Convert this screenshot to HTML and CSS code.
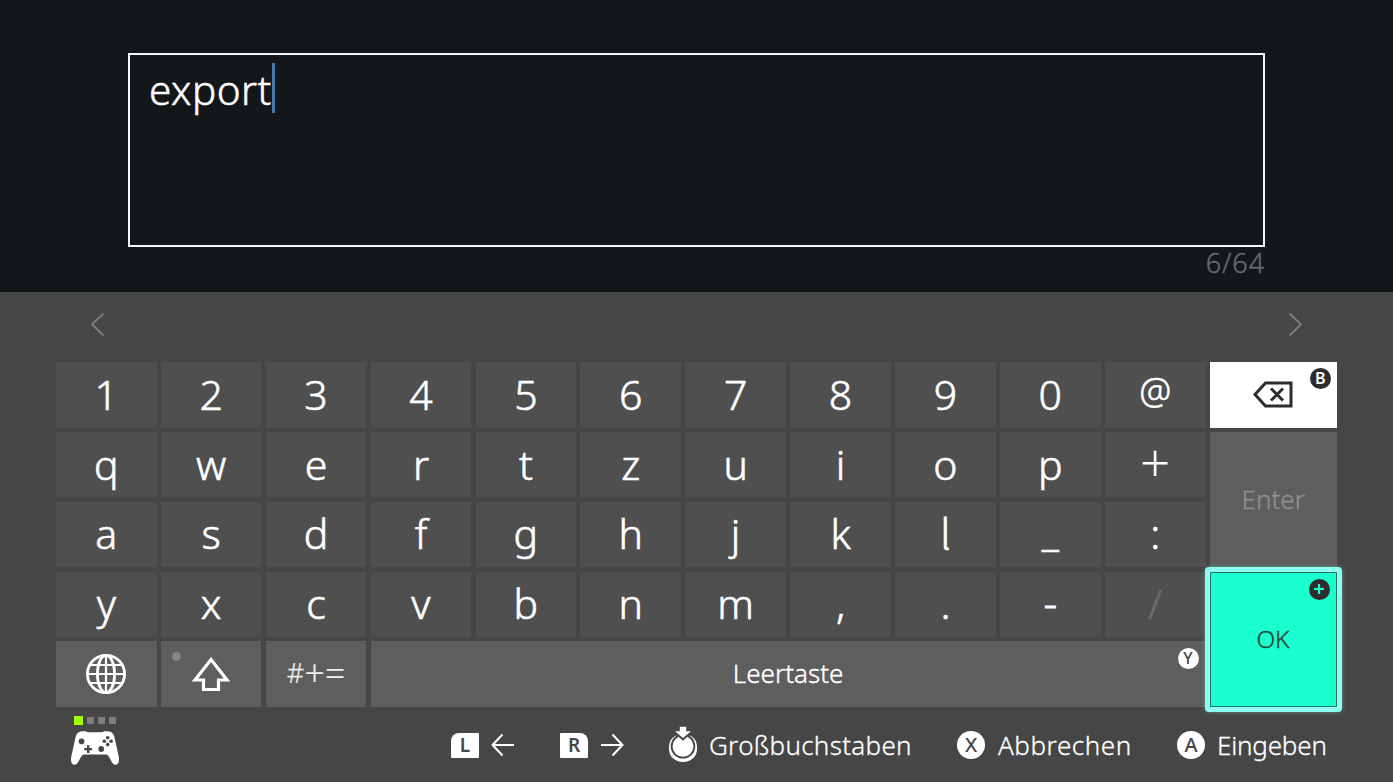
FILE: index.html
```html
<!DOCTYPE html>
<html lang="de">
<head>
<meta charset="utf-8">
<title>Tastatur</title>
<link rel="stylesheet" href="styles.css">
</head>
<body>
<main class="screen">
  <section class="entry">
    <div class="field"><span class="value">export</span><span class="caret"></span></div>
    <div class="counter">6/64</div>
  </section>
  <section class="panel">
    <div class="suggestions">
      <svg width="15" height="25" viewBox="0 0 15 25"><path d="M13.5 1.5 2 12.5 13.5 23.5"/></svg>
      <svg width="15" height="25" viewBox="0 0 15 25"><path d="M1.5 1.5 13 12.5 1.5 23.5"/></svg>
    </div>
    <div class="keys">
      <div class="key">1</div><div class="key">2</div><div class="key">3</div><div class="key">4</div><div class="key">5</div><div class="key">6</div><div class="key">7</div><div class="key">8</div><div class="key">9</div><div class="key">0</div><div class="key at">@</div>
      <div class="key backspace">
        <svg width="40" height="27" viewBox="0 0 40 27"><path d="M2 13.5 12.5 2H38V25H12.5Z"/><path d="M18 7.5 30 19.5M30 7.5 18 19.5"/></svg>
        <span class="badge dark">B</span>
      </div>
      <div class="key">q</div><div class="key">w</div><div class="key">e</div><div class="key">r</div><div class="key">t</div><div class="key">z</div><div class="key">u</div><div class="key">i</div><div class="key">o</div><div class="key">p</div><div class="key plus">+</div>
      <div class="key enter">Enter</div>
      <div class="key">a</div><div class="key">s</div><div class="key">d</div><div class="key">f</div><div class="key">g</div><div class="key">h</div><div class="key">j</div><div class="key">k</div><div class="key ell">l</div><div class="key underscore">_</div><div class="key">:</div>
      <div class="key">y</div><div class="key">x</div><div class="key">c</div><div class="key">v</div><div class="key">b</div><div class="key">n</div><div class="key">m</div><div class="key">,</div><div class="key">.</div><div class="key hyphen">-</div><div class="key off">/</div>
      <div class="key ok"><span>OK</span>
        <span class="badge dark"><svg width="12" height="12" viewBox="0 0 12 12"><path d="M6 1V11M1 6H11" stroke="#1affce" stroke-width="2.2"/></svg></span>
      </div>
      <div class="key tool">
        <svg class="globe" width="42" height="42" viewBox="0 0 42 42"><circle cx="21" cy="21" r="18.6"/><ellipse cx="21" cy="21" rx="8.6" ry="18.6"/><path d="M21 2V40M2 21H40M5 12H37M5 30H37" stroke-width="2.2"/></svg>
      </div>
      <div class="key tool">
        <svg width="40" height="36" viewBox="0 0 40 36"><path d="M20 3.5 36 24H27.5V33.5H12.5V24H4Z"/></svg>
        <span class="dot"></span>
      </div>
      <div class="key tool symbols"><span>#</span><span class="wide">+</span><span class="wide">=</span></div>
      <div class="key tool space"><span>Leertaste</span><span class="badge light">Y</span></div>
    </div>
    <footer class="bar">
      <div class="player">
        <div class="leds"><i class="led on"></i><i class="led"></i><i class="led"></i><i class="led"></i></div>
        <svg width="50" height="36" viewBox="0 0 50 36"><path fill="#fff" d="M14 1.3C15 .9 16.5 1.6 18 2.2H32C33.5 1.6 35 .9 36 1.3C40.5 1 43.3 2.8 44.3 6.5L48.8 27C49.5 31.5 48.3 34.5 45.7 34.8C43.2 35 42 32.5 40.8 30L38.6 26.3C37.7 25 36.7 24.6 35 24.6H15C13.3 24.6 12.3 25 11.4 26.3L9.2 30C8 32.5 6.8 35 4.3 34.8C1.7 34.5.5 31.5 1.2 27L5.7 6.5C6.7 2.8 9.5 1 14 1.3Z"/><g fill="#464646"><circle cx="11.5" cy="11.3" r="2.9"/><circle cx="31.2" cy="19" r="2.9"/><circle cx="37.7" cy="7.8" r="1.8"/><circle cx="37.7" cy="14.6" r="1.8"/><circle cx="34.3" cy="11.2" r="1.8"/><circle cx="41.1" cy="11.2" r="1.8"/><path d="M17 15.2H19.4V17.9H22V20.2H19.4V23H17V20.2H14.2V17.9H17Z"/></g></svg>
      </div>
      <div class="hints">
        <div class="hint"><span class="shoulder left">L</span><svg class="arrow" width="24" height="24" viewBox="0 0 24 24"><path d="M23 12H1.5M11.5 1.5 1.5 12 11.5 22.5"/></svg></div>
        <div class="hint"><span class="shoulder right">R</span><svg class="arrow" width="24" height="24" viewBox="0 0 24 24"><path d="M1 12H22.5M12.5 1.5 22.5 12 12.5 22.5"/></svg></div>
        <div class="hint"><svg class="stick" width="28" height="37" viewBox="0 0 28 37"><path d="M0 21C0 16 2.5 12 6.5 9.8H21.5C25.5 12 28 16 28 21V23C28 30.5 22 36 14 36S0 30.5 0 23Z" fill="#fff"/><circle cx="14" cy="20.3" r="11.4" fill="#fff" stroke="#464646" stroke-width="1.8"/><path d="M10.8 1H17.2V5.5H22.5L14 13 5.5 5.5H10.8Z" fill="#fff" stroke="#464646" stroke-width="2.8"/><path d="M10.8.8H17.2V5.3H22L14 12 6 5.3H10.8Z" fill="#fff"/></svg><span class="label caps">Großbuchstaben</span></div>
        <div class="hint"><span class="round">X</span><span class="label cancel">Abbrechen</span></div>
        <div class="hint"><span class="round">A</span><span class="label submit">Eingeben</span></div>
      </div>
    </footer>
  </section>
</main>
</body>
</html>
```
FILE: styles.css
```css
* { box-sizing: border-box; }
body { margin: 0; font-family: "Noto Sans", "Noto Sans CJK JP", sans-serif; font-weight: 300; color: #fff; }
svg { display: block; flex: none; }
.screen { width: 1393px; height: 782px; overflow: hidden; background: #13171a; display: flex; flex-direction: column; }
.entry { height: 292px; padding: 53px 128px 0; border-bottom: 2px solid #0e1316; }
.field { height: 194px; width: 1137px; border: 2px solid #f5f8f7; padding: 8px 19px; display: flex; align-items: flex-start; font-size: 40.5px; line-height: 54px; }
.value { letter-spacing: .5px; width: 123px; white-space: nowrap; -webkit-text-stroke: .5px; }
.caret { width: 3px; height: 50px; background: #467ba8; }
.counter { width: 1137px; text-align: right; color: #686b6d; font-size: 27px; line-height: 32px; letter-spacing: .9px; -webkit-text-stroke: .4px; }
.panel { height: 490px; background: #464646; display: flex; flex-direction: column; }
.suggestions { height: 70px; padding: 20px 90px 0; display: flex; justify-content: space-between; align-items: flex-start; fill: none; stroke: #7c7c7c; stroke-width: 2; }
.keys { margin-left: 56px; width: 1280.8px; height: 345px; display: grid; grid-template-columns: repeat(11, 100.6px) 126.9px; grid-template-rows: repeat(5, 65.5px); gap: 4.35px 4.3px; }
.key { position: relative; background: #4f4f4f; display: flex; align-items: center; justify-content: center; font-size: 41px; line-height: 56px; padding-bottom: 2px; -webkit-text-stroke: .6px; }
.at { font-size: 36px; padding-bottom: 7px; }
.plus { font-size: 53px; padding-bottom: 5px; -webkit-text-stroke: 0; }
.ell { font-family: "Noto Sans CJK JP", sans-serif; font-size: 41px; padding-bottom: 6px; -webkit-text-stroke: .6px; }
.underscore { padding-bottom: 6px; }
.hyphen { padding-bottom: 4px; -webkit-text-stroke: 1px; }
.off { color: #6b6b6b; }
.backspace { background: #fff; fill: none; stroke: #2d2d2d; stroke-width: 3; padding: 0; }
.enter { grid-row: span 2; background: #5e5e5e; color: #8e8e8e; font-size: 26px; -webkit-text-stroke: .4px; }
.ok { grid-row: span 2; padding: 0 1px 0 0; background: #1affce; color: #284b43; font-size: 24.5px; border: 1px solid #29705f; box-shadow: 0 0 5px 4px #63b5ab; border-radius: 1px; z-index: 2; letter-spacing: -.5px; -webkit-text-stroke: .4px; }
.ok::before { content: ""; position: absolute; inset: -6px; border: 5px solid #8cfff0; border-radius: 4px; }
.badge { position: absolute; right: 6px; top: 6px; width: 21px; height: 21px; border-radius: 50%; display: flex; align-items: center; justify-content: center; font-size: 16px; line-height: 20px; font-weight: 600; letter-spacing: 0; padding-bottom: 1px; -webkit-text-stroke: 0; }
.ok .badge { padding: 0; }
.dark { background: #2d2d2d; color: #fff; }
.light { background: #fff; color: #444; font-weight: 500; right: 7px; top: 7px; }
.tool { background: #5e5e5e; fill: none; stroke: #fff; stroke-width: 3.2; padding: 0; }
.globe { stroke-width: 2.8; }
.dot { position: absolute; left: 11px; top: 11px; width: 9px; height: 9px; border-radius: 50%; background: #808787; }
.symbols { font-size: 27px; color: #eee; padding-bottom: 2px; -webkit-text-stroke: .2px; }
.wide { font-size: 36px; line-height: 36px; }
.space { grid-column: span 8; font-size: 26px; padding-bottom: 2px; -webkit-text-stroke: .4px; }
.bar { height: 75px; padding-left: 70px; display: flex; align-items: flex-start; }
.player { width: 381px; padding-top: 9px; }
.leds { height: 9px; padding-left: 4px; display: flex; align-items: center; gap: 4px; margin-bottom: 5px; }
.led { width: 7px; height: 7px; background: #7e7e7e; }
.on { width: 9px; height: 9px; background: #a2ff00; }
.hints { padding-top: 18px; display: grid; grid-template-columns: 109px 109px 288px 220px 160px; height: 60px; }
.hint { height: 40px; display: flex; align-items: center; }
.shoulder { width: 28px; height: 25px; background: #fff; color: #464646; display: flex; align-items: center; justify-content: center; font-size: 19px; line-height: 25px; font-weight: 600; }
.left { border-radius: 8px 1px 1px 1px; }
.right { border-radius: 1px 8px 1px 1px; }
.arrow { margin-left: 12px; fill: none; stroke: #fff; stroke-width: 2; }
.stick { margin-top: -2px; }
.label { margin-left: 12px; padding-bottom: 1px; font-size: 26px; line-height: 38px; white-space: nowrap; -webkit-text-stroke: .3px; }
.caps { letter-spacing: .3px; }
.cancel { letter-spacing: .55px; margin-left: 13px; }
.submit { letter-spacing: -.2px; }
.round { width: 28px; height: 28px; border-radius: 50%; background: #fff; color: #464646; display: flex; align-items: center; justify-content: center; font-size: 20px; line-height: 28px; font-weight: 500; }
```
